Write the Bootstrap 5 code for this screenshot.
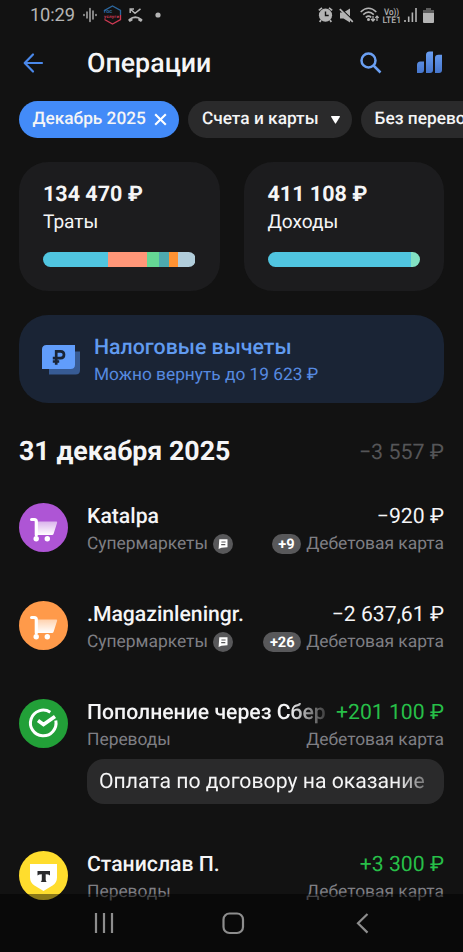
<!DOCTYPE html>
<html lang="ru">
<head>
<meta charset="utf-8">
<meta name="viewport" content="width=device-width, initial-scale=1">
<title>Операции</title>
<link href="https://cdn.jsdelivr.net/npm/bootstrap@5.3.0/dist/css/bootstrap.min.css" rel="stylesheet">
<style>
body{background:#121212;color:#f5f5f6;font-family:Roboto,"Liberation Sans",sans-serif;text-rendering:geometricPrecision}
.screen{width:463px;height:952px;background:#121212}
.status{height:30px;padding:0 29px 0 30px;color:#b4b4b4;font-size:18.3px}
.clock{line-height:30px;letter-spacing:-.15px;padding-top:1px}
.appbar{height:65px;padding:0 21px 0 22px}
.appbar h1{font-size:26.8px;font-weight:500;line-height:32px;margin-left:42px}
.chips{padding:6px 0 0 19px;gap:9.5px}
.chip{height:37px;border-radius:19px;background:#2a2a2b;font-size:17.3px;font-weight:500;padding:0 12px 0 13.5px;gap:8px;flex:none}
.chip span{padding-top:1.5px}
.chip.on{background:#438bf8}
.stats{padding:24px 19px 0;gap:24px}
.stat{height:129px;border-radius:29px;background:#1c1c1e;padding:19px 24px 0;flex:1 1 0}
.sum{font-size:21.5px;line-height:27px;font-weight:700}
.kind{font-size:19.1px;line-height:28px}
.meter{height:15px;border-radius:8px;margin-top:16px}
.tax{margin:24px 19px 0;height:88px;border-radius:29px;background:#1a2435;padding:0 22px}
.tax svg{margin-right:13px}
.tax-a{font-size:21.3px;line-height:29px;color:#619bf0;font-weight:500;padding-top:3px}
.tax-b{font-size:17.3px;line-height:27px;color:#568ae0}
.day{margin:28px 19px 0;height:40px}
.day h2{font-size:26.8px;font-weight:700;padding-top:1px}
.day span{font-size:21.4px;color:#555557;margin-top:5px}
.ops{padding:31.5px 19px 0}
.op{height:98.2px;gap:19px}
.op.noted{height:152px}
.ava{width:49px;height:49px;flex:none}
.l1{font-size:21.2px;line-height:28px;height:28px;gap:11px}
.l2{font-size:17.4px;line-height:26px;height:26px;color:#7f7f84}
.nm{font-weight:500;white-space:nowrap;overflow:hidden}
.fade-r{-webkit-mask-image:linear-gradient(90deg,#000 85%,rgba(0,0,0,.2));mask-image:linear-gradient(90deg,#000 85%,rgba(0,0,0,.2))}
.plus{color:#27bf48}
.pill{background:#58585a;color:#fff;font-size:14.6px;font-weight:700;line-height:20px;border-radius:10px;padding:0 6.5px;margin-right:5px}
.note{height:45px;border-radius:17px;background:#2a2a2b;font-size:21.2px;line-height:45px;padding:0 18px 0 12px;margin-top:6px;white-space:nowrap}
.note div{overflow:hidden;-webkit-mask-image:linear-gradient(90deg,#000 91%,rgba(0,0,0,.35));mask-image:linear-gradient(90deg,#000 91%,rgba(0,0,0,.35))}
.sysbar{height:58px;background:rgba(0,0,0,.45);width:463px}
svg{display:block;flex:none}
</style>
<script src="https://cdn.jsdelivr.net/npm/bootstrap@5.3.0/dist/js/bootstrap.bundle.min.js"></script>
</head>
<body>
<svg width="0" height="0" class="position-absolute">
<defs>
<linearGradient id="basket" x1="0" y1="0" x2="0" y2="1"><stop offset="0" stop-color="#fff" stop-opacity=".55"/><stop offset="1" stop-color="#fff"/></linearGradient>
<linearGradient id="bars" x1="0" y1="0" x2="0" y2="1"><stop offset="0" stop-color="#6a9ff2"/><stop offset="1" stop-color="#4676cc"/></linearGradient>
<symbol id="cart" viewBox="0 0 49 49"><path d="M17 18.500H37.200Q38.500 18.500 38.100 19.700L34.700 30.500Q34.300 32 33 32H17Z" fill="url(#basket)"/><path d="M12.600 16.500H15.300Q17.300 16.500 17.300 18.500V32" fill="none" stroke="#fff" stroke-width="3.200" stroke-linecap="round"/><circle cx="17.200" cy="35.700" r="2.700" fill="#fff"/><circle cx="28.300" cy="35.700" r="2.700" fill="#fff"/></symbol>
<symbol id="memo" viewBox="0 0 20 20"><circle cx="10" cy="10" r="10" fill="#58585a"/><path d="M6.300 5.300H14.500V13.200L8.500 13.700 5.600 15Z" fill="#fff"/><path d="M8.400 8H12.600M8.200 10.700H12.300" stroke="#58585a" stroke-width="1.200"/></symbol>
</defs>
</svg>
<main class="screen position-relative overflow-hidden">
  <div class="status d-flex align-items-center">
    <span class="clock">10:29</span>
    <svg class="ms-2" width="14" height="16" viewBox="0 0 14 16" stroke="#b4b4b4" stroke-width="1.400" stroke-linecap="round"><path d="M1 7.500V8.500M4 5V11M7 1.500V14.500M10 4V12M13 7.500V8.500"/></svg>
    <svg style="margin-left:6px" width="19" height="20" viewBox="0 0 19 20"><path d="M1.500 6.500V5.500L9.500 1 17.500 5.500V10" fill="none" stroke="#2d689f" stroke-width="1.300"/><path d="M17.500 10V14.500L9.500 19 1.500 14.500" fill="none" stroke="#cf3a54" stroke-width="1.300"/><text x="1" y="8.300" font-size="5.500" fill="#2d689f" font-weight="700">гос</text><text x="1" y="13" font-size="4.500" fill="#cf3a54" font-weight="700" textLength="15">услуги</text></svg>
    <svg style="margin-left:6px" width="15" height="15" viewBox="0 0 15 15"><path d="M2.200 5V1H6M2.200 1L7 5.300 12.500 .8" fill="none" stroke="#b4b4b4" stroke-width="1.500"/><path d="M.8 10.900Q7.200 5.500 14 10.900Q14.900 11.800 14.200 12.600L13 13.900 10.300 12.400V10.600Q7.200 9.700 4.500 10.600V12.400L1.700 13.900 .5 12.600Q-.1 11.800 .8 10.900Z" fill="#b4b4b4"/></svg>
    <svg style="margin-left:12px" width="6" height="6" viewBox="0 0 6 6"><circle cx="3" cy="3" r="2.600" fill="#b4b4b4"/></svg>
    <div class="ms-auto d-flex align-items-center">
      <svg width="15" height="16" viewBox="0 0 15 16"><path d="M.8 3.300L4 .8M14.200 3.300L11 .8M3 13L1.700 15M12 13L13.300 15" stroke="#b4b4b4" stroke-width="1.700"/><circle cx="7.500" cy="8.200" r="6.600" fill="#b4b4b4"/><path d="M7.500 4.500V8.500H10.700" fill="none" stroke="#121212" stroke-width="1.400"/></svg>
      <svg style="margin-left:6px" width="15" height="15" viewBox="0 0 15 15"><path d="M1 4.500H4.500L11 .5V14.500L4.500 10.500H1Z" fill="#b4b4b4"/><path d="M1.500 .2L14.500 12.800" stroke="#121212" stroke-width="1.300"/><path d="M.8 1.200L13.800 13.800" stroke="#b4b4b4" stroke-width="1.700"/></svg>
      <svg style="margin-left:6px" width="19" height="16" viewBox="0 0 19 16" fill="none" stroke="#b4b4b4" stroke-width="1.600"><path d="M.7 5Q8.500-2.500 16.300 5M3.200 7.700Q8.500 2.700 13.800 7.700M5.800 10.300Q8.500 7.900 11.200 10.300"/><circle cx="8.500" cy="12.500" r=".7"/><path d="M13 9V14M11 12L13 14.200 15 12M17 14V9M15.300 10.800L17 9 18.700 10.800" stroke-width="1.200"/></svg>
      <svg style="margin-left:3px" width="20" height="18" viewBox="0 0 20 18" fill="#b4b4b4" font-weight="500"><text x="2" y="8.500" font-size="9" textLength="15" lengthAdjust="spacingAndGlyphs">Vo))</text><text x=".5" y="16.500" font-size="9" textLength="18.500" lengthAdjust="spacingAndGlyphs">LTE1</text></svg>
      <svg style="margin-left:2px" width="13" height="14" viewBox="0 0 13 14" stroke="#b4b4b4" stroke-width="1.600"><path d="M1 12V14M4.700 8.500V14M8.400 4.500V14"/><path d="M12 0V14"/></svg>
      <svg style="margin-left:6px" width="11" height="15" viewBox="0 0 11 15"><path d="M3 0H8V2H11V5H0V2H3Z" fill="#5c5c5c"/><path d="M0 5H11V14Q11 15 10 15H1Q0 15 0 14Z" fill="#b4b4b4"/></svg>
    </div>
  </div>
  <header class="appbar d-flex align-items-center">
    <svg width="23" height="22" viewBox="0 0 23 22" fill="none" stroke="#4a88ea" stroke-width="2.200" stroke-linecap="round" stroke-linejoin="round"><path d="M20 11H3M11 2.500L2.700 11 11 19.500"/></svg>
    <h1 class="mb-0">Операции</h1>
    <svg class="ms-auto" width="22" height="22" viewBox="0 0 22 22" fill="none" stroke="#6a9ff2" stroke-width="2.500"><circle cx="8.500" cy="8.500" r="7"/><path d="M13.500 13.500L20.500 20.500"/></svg>
    <svg style="margin-left:35px" width="25" height="23" viewBox="0 0 25 23" fill="url(#bars)"><path d="M0 22V14Q0 10.500 3.500 10.500H7V19Q7 22 4 22ZM9 22V4Q9 .5 12.500 .5H16V19Q16 22 13 22ZM18 22V7Q18 3.800 21.500 3.800H25V19Q25 22 22 22Z"/></svg>
  </header>
  <nav class="chips d-flex">
    <div class="chip on d-flex align-items-center"><span>Декабрь 2025</span><svg width="13" height="13" viewBox="0 0 13 13"><path d="M1.200 1.200L11.800 11.800M11.800 1.200L1.200 11.800" stroke="#fff" stroke-width="2.100"/></svg></div>
    <div class="chip d-flex align-items-center"><span>Счета и карты</span><svg class="ms-1" width="9" height="8" viewBox="0 0 9 8"><path d="M.5 0H8.500Q9.200 .2 8.800 1L5 7.300Q4.500 8 4 7.300L.2 1Q-.2 .2 .5 0Z" fill="#fff"/></svg></div>
    <div class="chip d-flex align-items-center text-nowrap"><span>Без переводов</span></div>
  </nav>
  <section class="stats d-flex">
    <div class="stat"><div class="sum">134 470 ₽</div><div class="kind">Траты</div>
      <div class="meter d-flex overflow-hidden"><i style="width:42.7%;background:#50c5e0"></i><i style="width:25.300%;background:#ff9678"></i><i style="width:7.800%;background:#65d794"></i><i style="width:6.700%;background:#4da9af"></i><i style="width:6.200%;background:#ff9232"></i><i style="width:11.300%;background:#b1cddb"></i></div></div>
    <div class="stat"><div class="sum">411 108 ₽</div><div class="kind">Доходы</div>
      <div class="meter d-flex overflow-hidden"><i style="width:94%;background:#50c5e0"></i><i style="width:6%;background:#83e2c4"></i></div></div>
  </section>
  <section class="tax d-flex align-items-center">
    <svg width="40" height="32" viewBox="0 0 40 32"><path d="M34 8.500H39V27Q39 31.500 34.500 31.500H8V26Z" fill="#375b94"/><path d="M5.500 2H34V21.500Q34 26 29.500 26H1V6.500Q1 2 5.500 2Z" fill="#619dfb"/><path d="M15.200 21.800V8.300H19.500Q23 8.300 23 11.700T19.500 15.200H11.800M11.800 18.500H18.200" fill="none" stroke="#1a2435" stroke-width="2.700"/></svg>
    <div><div class="tax-a">Налоговые вычеты</div><div class="tax-b">Можно вернуть до 19 623 ₽</div></div>
  </section>
  <div class="day d-flex align-items-center justify-content-between"><h2 class="mb-0">31 декабря 2025</h2><span>−3 557 ₽</span></div>
  <section class="ops">
    <article class="op d-flex align-items-start">
      <svg class="ava" viewBox="0 0 49 49"><circle cx="24.500" cy="24.500" r="24.500" fill="#ae55d5"/><use href="#cart"/></svg>
      <div class="flex-grow-1">
        <div class="l1 d-flex justify-content-between"><span class="nm">Katalpa</span><span>−920 ₽</span></div>
        <div class="l2 d-flex align-items-center"><span>Супермаркеты</span><svg style="margin-left:5px" width="20" height="20"><use href="#memo"/></svg><span class="pill ms-auto">+9</span><span>Дебетовая карта</span></div>
      </div>
    </article>
    <article class="op d-flex align-items-start">
      <svg class="ava" viewBox="0 0 49 49"><circle cx="24.500" cy="24.500" r="24.500" fill="#ff9a4a"/><use href="#cart"/></svg>
      <div class="flex-grow-1">
        <div class="l1 d-flex justify-content-between"><span class="nm">.Magazinleningr.</span><span>−2 637,61 ₽</span></div>
        <div class="l2 d-flex align-items-center"><span>Супермаркеты</span><svg style="margin-left:5px" width="20" height="20"><use href="#memo"/></svg><span class="pill ms-auto">+26</span><span>Дебетовая карта</span></div>
      </div>
    </article>
    <article class="op noted d-flex align-items-start">
      <svg class="ava" viewBox="0 0 49 49"><circle cx="24.500" cy="24.500" r="24.500" fill="#22a038"/><path d="M31.300 13.300A12.800 12.800 0 1 0 36.800 21.500" fill="none" stroke="#fff" stroke-width="3"/><path d="M19 21.500L24.500 25.500 36 17.500" fill="none" stroke="#fff" stroke-width="3.600"/></svg>
      <div class="flex-grow-1" style="min-width:0">
        <div class="l1 d-flex justify-content-between"><span class="nm fade-r">Пополнение через Сбер</span><span class="plus text-nowrap">+201 100 ₽</span></div>
        <div class="l2 d-flex justify-content-between"><span>Переводы</span><span>Дебетовая карта</span></div>
        <div class="note"><div>Оплата по договору на оказание</div></div>
      </div>
    </article>
    <article class="op d-flex align-items-start">
      <svg class="ava" viewBox="0 0 49 49"><circle cx="24.500" cy="24.500" r="24.500" fill="#ffdd2d"/><path d="M11 13H38V26.500Q38 31.500 33.500 34.500L24.500 40 15.500 34.500Q11 31.500 11 26.500Z" fill="#fff"/><path d="M18.500 20H31V24.400Q29.700 23.200 26.700 23.200V28.500Q26.700 30.300 27.700 31H21.700Q22.800 30.300 22.800 28.500V23.200Q19.800 23.200 18.500 24.400Z" fill="#2b2b2d"/></svg>
      <div class="flex-grow-1">
        <div class="l1 d-flex justify-content-between"><span class="nm">Станислав П.</span><span class="plus">+3 300 ₽</span></div>
        <div class="l2 d-flex justify-content-between"><span>Переводы</span><span>Дебетовая карта</span></div>
      </div>
    </article>
  </section>
  <footer class="sysbar position-absolute bottom-0 start-0">
    <svg width="463" height="58" viewBox="0 0 463 58" fill="none" stroke="#8d8d8d" stroke-width="2.200"><path d="M96 19V39M104 19V39M112 19V39"/><rect x="223.500" y="19.500" width="19.500" height="19.500" rx="6"/><path d="M367.500 20L358 29.300 367.500 38.600"/></svg>
  </footer>
</main>
</body>
</html>
